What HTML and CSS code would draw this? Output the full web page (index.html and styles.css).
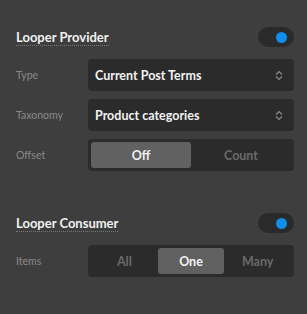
FILE: index.html
```html
<!DOCTYPE html>
<html lang="en">
<head>
    <meta charset="UTF-8">
    <meta name="viewport" content="width=device-width, initial-scale=1.0">
    <title>Looper</title>
    <link rel="stylesheet" href="styles.css">
</head>
<body>
    <div class="section">
        <div class="section-head">
            <span class="title">Looper Provider</span>
            <div class="toggle on"><span class="knob"></span></div>
        </div>
        <div class="rows">
            <div class="row">
                <span class="label">Type</span>
                <div class="select">
                    <span>Current Post Terms</span>
                    <svg class="chevrons" width="8" height="11" viewBox="0 0 8 11"><path d="M1 4.5 L4 1.5 L7 4.5 M1 6.5 L4 9.5 L7 6.5" fill="none" stroke="#8a8a8a" stroke-width="1.2"/></svg>
                </div>
            </div>
            <div class="row">
                <span class="label">Taxonomy</span>
                <div class="select">
                    <span>Product categories</span>
                    <svg class="chevrons" width="8" height="11" viewBox="0 0 8 11"><path d="M1 4.5 L4 1.5 L7 4.5 M1 6.5 L4 9.5 L7 6.5" fill="none" stroke="#8a8a8a" stroke-width="1.2"/></svg>
                </div>
            </div>
            <div class="row">
                <span class="label">Offset</span>
                <div class="segmented two">
                    <div class="seg active">Off</div>
                    <div class="seg">Count</div>
                </div>
            </div>
        </div>
    </div>

    <div class="section">
        <div class="section-head">
            <span class="title">Looper Consumer</span>
            <div class="toggle on"><span class="knob"></span></div>
        </div>
        <div class="rows">
            <div class="row">
                <span class="label">Items</span>
                <div class="segmented three">
                    <div class="seg">All</div>
                    <div class="seg active">One</div>
                    <div class="seg">Many</div>
                </div>
            </div>
        </div>
    </div>
</body>
</html>
```

FILE: styles.css
```css
body {
    font-family: Lato, "Open Sans", sans-serif;
    background-color: #3e3e3e;
    margin: 0;
    padding: 27px 13px 0 16px;
    color: #eee;
}
.section + .section {
    margin-top: 42px;
}
.section-head {
    display: flex;
    justify-content: space-between;
    align-items: center;
    height: 20px;
    margin-bottom: 12px;
}
.title {
    font-size: 13px;
    font-weight: bold;
    color: #f0f0f0;
    line-height: 15px;
    margin-top: 2px;
    border-bottom: 1px dotted #777;
}
.toggle {
    width: 36px;
    height: 20px;
    border-radius: 10px;
    background-color: #2a2a2a;
    display: flex;
    align-items: center;
    justify-content: flex-end;
    padding: 0 7px;
    box-sizing: border-box;
}
.toggle .knob {
    width: 11px;
    height: 11px;
    border-radius: 50%;
    background-color: #118ee9;
}
.rows {
    display: flex;
    flex-direction: column;
    gap: 8px;
}
.row {
    display: grid;
    grid-template-columns: 72px 1fr;
    align-items: center;
}
.label {
    font-size: 10.5px;
    color: #8a8a8a;
}
.select {
    height: 32px;
    background-color: #2b2b2b;
    border-radius: 4px;
    display: flex;
    align-items: center;
    justify-content: space-between;
    padding: 0 11px 0 7px;
    font-size: 12.5px;
    font-weight: bold;
    color: #f2f2f2;
}
.segmented {
    height: 32px;
    background-color: #2b2b2b;
    border-radius: 4px;
    padding: 3px;
    box-sizing: border-box;
    display: grid;
    grid-auto-flow: column;
    grid-auto-columns: 1fr;
}
.seg {
    display: flex;
    align-items: center;
    justify-content: center;
    font-size: 12.5px;
    font-weight: bold;
    color: #6a6a6a;
    border-radius: 3px;
}
.seg.active {
    background-color: #616161;
    color: #f2f2f2;
}
```
